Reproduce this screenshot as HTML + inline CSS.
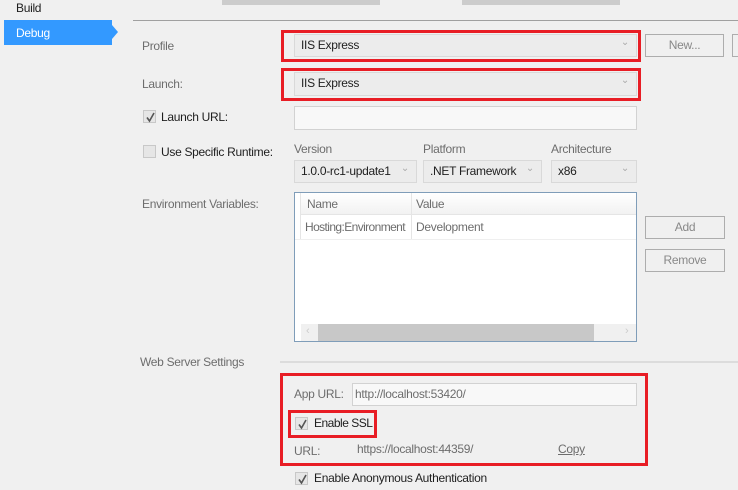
<!DOCTYPE html>
<html><head><style>
body{margin:0;width:738px;height:490px;background:#f0f0f0;position:relative;overflow:hidden;font-family:"Liberation Sans",sans-serif;font-size:12px;letter-spacing:-0.3px;color:#1e1e1e}
.a{position:absolute}
.lbl{position:absolute;color:#6d6d6d;line-height:14px}
.t{position:absolute;color:#1e1e1e;line-height:14px}
.combo{position:absolute;background:#ececec;border:1px solid #d9d9d9;box-sizing:border-box;padding-left:6px;line-height:21px}
.combo:after{content:"⌄";position:absolute;right:7px;top:-3px;color:#aaa;font-size:10px}
.red{position:absolute;border:3px solid #e81d25;box-sizing:border-box}
.btn{position:absolute;border:1px solid #adadad;background:#f0f0f0;box-sizing:border-box;text-align:center;color:#888;line-height:20px}
.cb{position:absolute;width:13px;height:13px;border:1px solid #c8c8c8;background:#e6e6e6;box-sizing:border-box}
.cb svg{position:absolute;left:1px;top:1px}
.tb{position:absolute;background:#f8f8f8;border:1px solid #d2d2d2;box-sizing:border-box}
</style></head><body>
<div class="a" style="left:222px;top:0;width:158px;height:5px;background:#ccc"></div>
<div class="a" style="left:462px;top:0;width:158px;height:5px;background:#ccc"></div>
<div class="a" style="left:133px;top:20px;width:605px;height:1px;background:#a0a0a0"></div>
<div class="t" style="left:16px;top:1px">Build</div>
<div class="a" style="left:4px;top:20px;width:108px;height:25px;background:#3399ff"></div>
<div class="a" style="left:112px;top:25px;width:0;height:0;border-top:7px solid transparent;border-bottom:7px solid transparent;border-left:6px solid #3399ff"></div>
<div class="a" style="left:16px;top:26px;color:#fff;line-height:14px">Debug</div>

<div class="lbl" style="left:142px;top:39px">Profile</div>
<div class="red" style="left:281px;top:30px;width:360px;height:32px"></div>
<div class="combo" style="left:294px;top:34px;width:343px;height:23px">IIS Express</div>
<div class="btn" style="left:645px;top:34px;width:79px;height:23px">New...</div>
<div class="btn" style="left:732px;top:34px;width:20px;height:23px"></div>

<div class="lbl" style="left:142px;top:77px">Launch:</div>
<div class="red" style="left:281px;top:68px;width:360px;height:33px"></div>
<div class="combo" style="left:294px;top:72px;width:343px;height:24px">IIS Express</div>

<div class="cb" style="left:143px;top:110px"><svg width="11" height="11"><path d="M2 5.5L4.5 9L9 1" fill="none" stroke="#555" stroke-width="1.6"/></svg></div>
<div class="t" style="left:161px;top:110px">Launch URL:</div>
<div class="tb" style="left:294px;top:106px;width:343px;height:24px"></div>

<div class="cb" style="left:143px;top:145px"></div>
<div class="t" style="left:161px;top:145px">Use Specific Runtime:</div>
<div class="lbl" style="left:294px;top:142px">Version</div>
<div class="lbl" style="left:423px;top:142px">Platform</div>
<div class="lbl" style="left:551px;top:142px">Architecture</div>
<div class="combo" style="left:294px;top:160px;width:123px;height:23px">1.0.0-rc1-update1</div>
<div class="combo" style="left:423px;top:160px;width:119px;height:23px">.NET Framework</div>
<div class="combo" style="left:551px;top:160px;width:86px;height:23px">x86</div>

<div class="lbl" style="left:142px;top:197px">Environment Variables:</div>
<div class="a" style="left:294px;top:192px;width:343px;height:150px;background:#fff;border:1px solid #7f9db9;box-sizing:border-box">
 <div class="a" style="left:5px;top:0;width:336px;height:21px;background:linear-gradient(#fff,#f2f2f2);border-bottom:1px solid #e5e5e5"></div>
 <div class="a" style="left:116px;top:0;width:1px;height:46px;background:#e5e5e5"></div>
 <div class="a" style="left:5px;top:0;width:1px;height:46px;background:#e5e5e5"></div>
 <div class="lbl" style="left:12px;top:4px">Name</div>
 <div class="lbl" style="left:121px;top:4px">Value</div>
 <div class="lbl" style="left:10px;top:27px;letter-spacing:-0.6px">Hosting:Environment</div>
 <div class="lbl" style="left:121px;top:27px">Development</div>
 <div class="a" style="left:0;top:46px;width:341px;height:1px;background:#efefef"></div>
 <div class="a" style="left:6px;top:131px;width:335px;height:17px;background:#f0f0f0"></div>
 <div class="a" style="left:23px;top:131px;width:276px;height:17px;background:#c8c8c8"></div>
 <div class="a" style="left:11px;top:132px;color:#ccc;font-size:11px">‹</div>
 <div class="a" style="left:330px;top:132px;color:#ccc;font-size:11px">›</div>
</div>
<div class="btn" style="left:645px;top:216px;width:80px;height:23px">Add</div>
<div class="btn" style="left:645px;top:249px;width:80px;height:23px">Remove</div>

<div class="lbl" style="left:140px;top:355px">Web Server Settings</div>
<div class="a" style="left:280px;top:361px;width:458px;height:2px;background:#dcdcdc"></div>
<div class="red" style="left:280px;top:373px;width:368px;height:93px"></div>
<div class="lbl" style="left:294px;top:387px">App URL:</div>
<div class="tb" style="left:352px;top:383px;width:285px;height:23px;color:#6d6d6d;padding-left:2px;line-height:20px">http://localhost:53420/</div>
<div class="red" style="left:288px;top:410px;width:89px;height:28px"></div>
<div class="cb" style="left:295px;top:417px"><svg width="11" height="11"><path d="M2 5.5L4.5 9L9 1" fill="none" stroke="#555" stroke-width="1.6"/></svg></div>
<div class="t" style="left:314px;top:416px;letter-spacing:-0.5px">Enable SSL</div>
<div class="lbl" style="left:294px;top:444px">URL:</div>
<div class="lbl" style="left:357px;top:442px">https://localhost:44359/</div>
<div class="lbl" style="left:558px;top:442px;text-decoration:underline">Copy</div>
<div class="cb" style="left:295px;top:472px"><svg width="11" height="11"><path d="M2 5.5L4.5 9L9 1" fill="none" stroke="#555" stroke-width="1.6"/></svg></div>
<div class="t" style="left:314px;top:471px">Enable Anonymous Authentication</div>
</body></html>
